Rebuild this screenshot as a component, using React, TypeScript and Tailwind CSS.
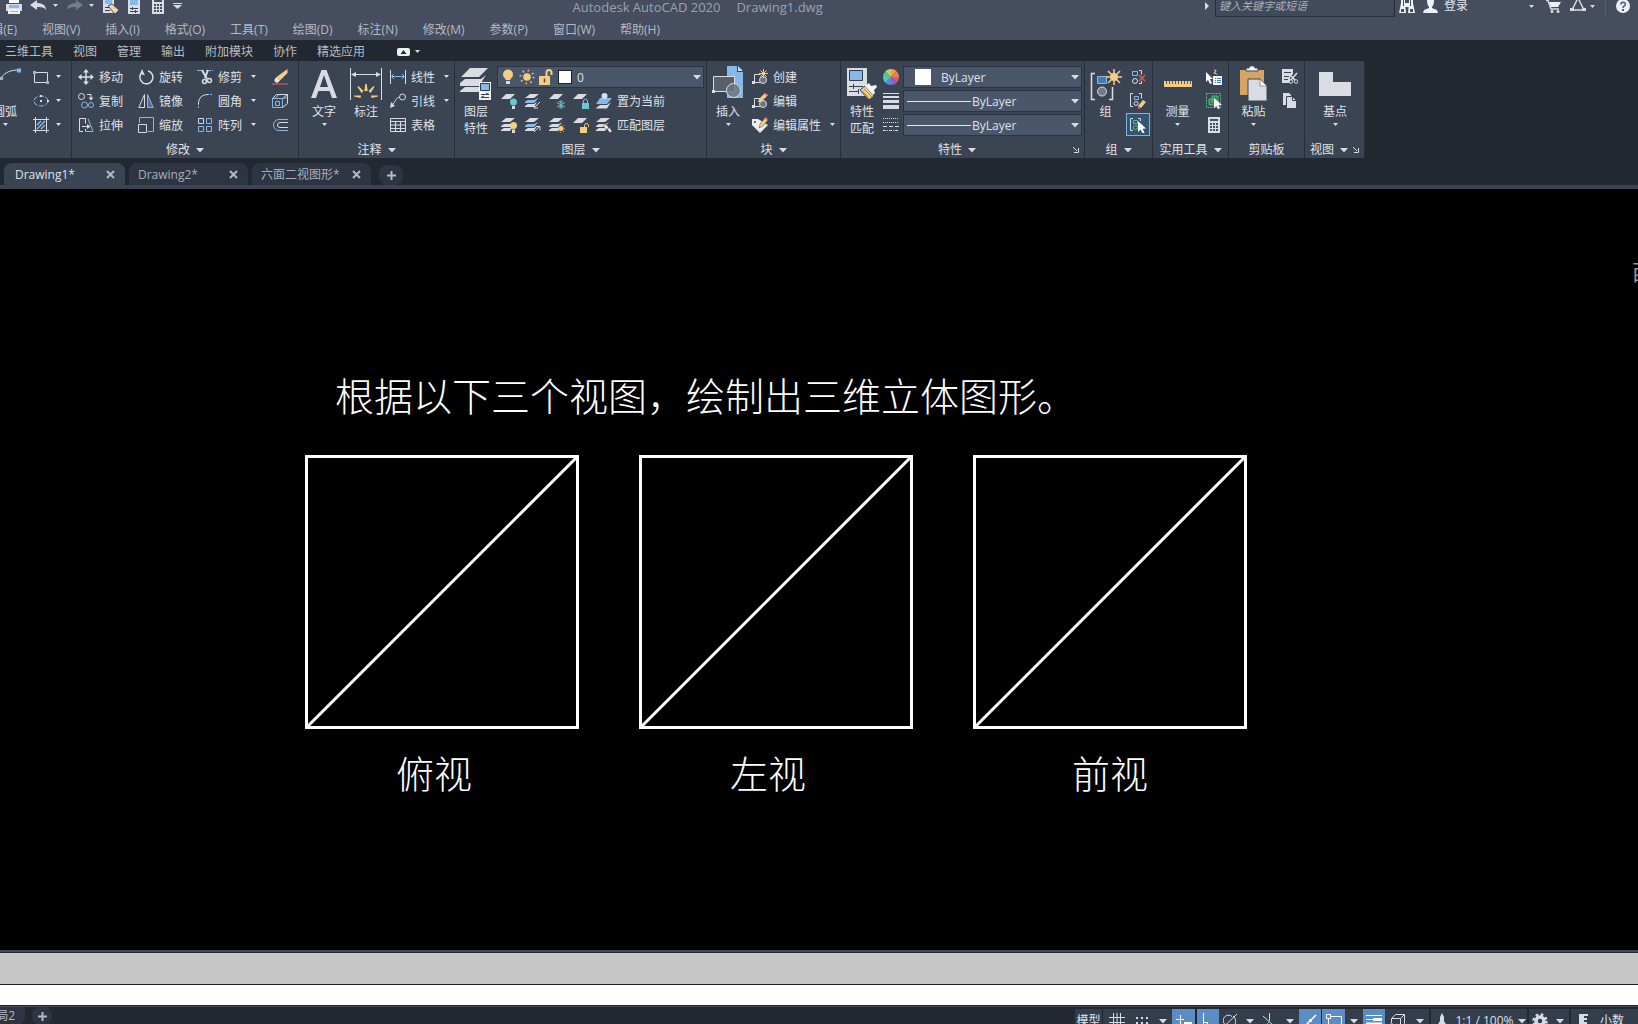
import React from "react";

type IconProps = { w?: number; h?: number; children: React.ReactNode };

const L = "#d9dde3";
const B = "#86b9e8";
const Y = "#f3cd84";
const T = "#6cc7d2";
const G = "#4fc07a";

const Icon = ({ w = 16, h = 16, children }: IconProps) => (
  <svg
    width={w}
    height={h}
    viewBox={`0 0 ${w} ${h}`}
    fill="none"
    stroke={L}
    strokeWidth={1}
    className="block shrink-0"
    aria-hidden="true"
  >
    {children}
  </svg>
);

const Caret = ({ big = false }: { big?: boolean }) =>
  big ? (
    <Icon w={8} h={5}>
      <path d="M0 0h8L4 4.5z" fill={L} stroke="none" />
    </Icon>
  ) : (
    <Icon w={5} h={4}>
      <path d="M0 0h5L2.5 3z" fill={L} stroke="none" />
    </Icon>
  );

/* ---------- draw / modify icons ---------- */

const ArcIcon = () => (
  <Icon w={21} h={40}>
    <path d="M1 13C5 7 11 5 19 5" stroke={L} />
    <path d="M17 3.500h4v4h-4zM0 12h3v3H0z" fill={B} stroke="none" />
  </Icon>
);
const RectIcon = () => (
  <Icon>
    <path d="M1.500 3.500h13v10h-13z" />
    <path d="M0 2h3v3H0zM13 12h3v3h-3z" fill={B} stroke="none" />
  </Icon>
);
const EllipseIcon = () => (
  <Icon>
    <ellipse cx="8" cy="8" rx="7" ry="5" strokeDasharray="5 1.500" stroke={B} />
    <path d="M7 7h2v2H7zM7 2h2v2H7zM14 7h2v2h-2z" fill={L} stroke="none" />
  </Icon>
);
const HatchIcon = () => (
  <Icon>
    <path d="M2.500 0v16M13.500 0v16M0 2.500h16M0 13.500h16" />
    <path d="M4 8l4-4M4 12l8-8M8 12l4-4" stroke={B} strokeWidth="1.500" />
  </Icon>
);
const MoveIcon = () => (
  <Icon>
    <path d="M8 2v12M2 8h12" strokeWidth="1.500" />
    <path d="M8 0l3 3.500H5zM8 16l3-3.500H5zM0 8l3.500-3v6zM16 8l-3.500-3v6z" fill={L} stroke="none" />
  </Icon>
);
const RotateIcon = () => (
  <Icon>
    <path d="M10 2A6.500 6.500 0 1 1 3.500 4" strokeWidth="1.500" />
    <path d="M3 0.500v5h5z" fill={L} stroke="none" transform="rotate(20 5 3)" />
  </Icon>
);
const TrimIcon = () => (
  <Icon>
    <path d="M0 1.500h6" stroke={B} />
    <path d="M9 1.500h7" stroke={B} strokeDasharray="2 1" />
    <path d="M5 1l5 9M11 1L8 9" strokeWidth="2" />
    <circle cx="7.500" cy="12.500" r="2" strokeWidth="1.500" />
    <circle cx="12.500" cy="11.500" r="2" strokeWidth="1.500" />
  </Icon>
);
const CopyIcon = () => (
  <Icon>
    <circle cx="3.500" cy="3.500" r="3" />
    <circle cx="6.500" cy="12" r="3" stroke={B} />
    <circle cx="13" cy="12" r="2.500" stroke={B} />
    <path d="M9 1.500h4V5" />
    <path d="M10.500 4.500h5L13 7.500z" fill={L} stroke="none" />
  </Icon>
);
const MirrorIcon = () => (
  <Icon>
    <path d="M6.500 1.500v13H0.800z" />
    <path d="M9.500 1.500v13h5.700z" stroke={B} fill="#4c7096" />
  </Icon>
);
const FilletIcon = () => (
  <Icon>
    <path d="M1.500 15v-5M10 1.500h6" stroke={B} strokeDasharray="2 1" />
    <path d="M1.500 11C1.500 5 5 1.500 11 1.500" />
  </Icon>
);
const StretchIcon = () => (
  <Icon>
    <path d="M5 14.500H1.500v-13h6v5M7.500 12v2.500" />
    <path d="M4 9.500h6" />
    <path d="M9 7l3.500 2.500L9 12z" fill={L} stroke="none" />
    <path d="M10 1.500l5 13H8" stroke={B} />
  </Icon>
);
const ScaleIcon = () => (
  <Icon>
    <path d="M1.500 6V0.500h14v14H10" stroke={B} />
    <path d="M0.500 7.500h8v8h-8z" />
  </Icon>
);
const ArrayIcon = () => (
  <Icon>
    <path d="M1.500 1.500h5v5h-5z" />
    <path d="M9.500 1.500h5v5h-5zM1.500 9.500h5v5h-5zM9.500 9.500h5v5h-5z" stroke={B} />
  </Icon>
);
const EraseIcon = () => (
  <Icon>
    <path d="M15.500 0v4L8 11.500 4.500 8z" fill={Y} stroke="none" />
    <path d="M4.500 8L8 11.500l-2 2c-2 1-4-1-3.500-3z" fill="#f2e4dc" stroke="none" />
    <path d="M0 15h16" stroke="#e36b5b" />
  </Icon>
);
const ExplodeIcon = () => (
  <Icon>
    <path d="M0.500 5.500h10v9h-10zM3.500 8.500h4v4h-4z" stroke={B} />
    <path d="M0.500 5.500l4-4h11l-5 4M10.500 14.500l5-4v-9" stroke={L} />
    <path d="M7 1.500l-4 4M11 5l4 0" stroke={B} />
  </Icon>
);
const OffsetIcon = () => (
  <Icon>
    <path d="M16 2.500H7a5.500 5.500 0 0 0 0 11h9" stroke={B} />
    <path d="M16 5.500H8a2.500 2.500 0 0 0 0 5h8" />
  </Icon>
);

/* ---------- annotation icons ---------- */

const TextIcon = () => (
  <Icon w={26} h={40}>
    <path
      fillRule="evenodd"
      d="M10.500 5h5L26 33h-5l-2.500-7h-11L5 33H0zM13 10l-4 12h8z"
      fill={L}
      stroke="none"
    />
  </Icon>
);
const DimensionIcon = () => (
  <Icon w={32} h={40}>
    <path d="M0.500 3v32M31.500 3v32M3 9.500h26" />
    <path d="M1 9.500l5-2.500v5zM31 9.500l-5-2.500v5z" fill={L} stroke="none" />
    <path
      d="M15.300 19h1.400l1 7h-3.400zM7.500 22l1-1 5 5-2 2zM24.500 22l-1-1-5 5 2 2zM4 31.500v-1l7 0-0.500 2.500zM28 31.500v-1l-7 0 0.500 2.500z"
      fill={Y}
      stroke="none"
    />
  </Icon>
);
const LinearIcon = () => (
  <Icon>
    <path d="M0.500 1v14M15.500 1v14" />
    <path d="M2 7.500h12M4 5L1.500 7.500 4 10M12 5l2.500 2.500L12 10" stroke={B} />
  </Icon>
);
const LeaderIcon = () => (
  <Icon>
    <circle cx="12.500" cy="4" r="3" />
    <path d="M9.500 4.500C6 4 6 8 3 11" />
    <path d="M0 15l1-6 4 4z" fill={L} stroke="none" />
  </Icon>
);
const TableIcon = () => (
  <Icon>
    <path d="M0.500 1.500h15v13H0.500zM0.500 4.500h15M0.500 8h15M0.500 11.500h15M5.500 4.500v10M10.500 4.500v10" />
  </Icon>
);

/* ---------- layer icons ---------- */

const LayerPropsIcon = () => (
  <Icon w={32} h={40}>
    <path d="M10 3h18l-9 9H1zM0 18l5-4h16l5-4-7 11H0zM0 26l5-4h15l3-4-4 9H0z" fill={L} stroke="none" />
    <path d="M19 17h12v18H19z" fill="#f2f4f6" stroke="none" />
    <path d="M20.500 18.500h9v7h-9z" fill={B} stroke="#2c3a4d" />
    <path d="M21 29.500h8M26 28l3 1.500M29 32.500h-8M24 31l-3 1.500" stroke="#344050" />
  </Icon>
);

const oneSheet = <path d="M5 1h9L9 6H0z" fill={L} stroke="none" />;
const threeSheets = (
  <path d="M5 1h9L9 5H0zM0 9l3-2h7l3-2-4 5H0zM0 13l3-2h6l3-2-3 5H0z" fill={L} stroke="none" />
);

const LayerOffIcon = () => (
  <Icon>
    {oneSheet}
    <circle cx="12.500" cy="9" r="3.500" fill={T} stroke="none" />
    <path d="M11 13h3v3h-3z" fill={L} stroke="none" />
  </Icon>
);
const LayerIsolateIcon = () => (
  <Icon>
    {threeSheets}
    <path d="M0 9l3-2h7l3-2-4 5H0z" fill={B} stroke="none" />
    <path d="M15 9l-5 5M9 11v4h4" />
  </Icon>
);
const LayerFreezeIcon = () => (
  <Icon>
    {oneSheet}
    <path d="M12 7v9M8 9.500l8 4.500M16 9.500L8 14M10 8l2 2 2-2M10 15l2-2 2 2" stroke={T} />
  </Icon>
);
const LayerLockIcon = () => (
  <Icon>
    {oneSheet}
    <path d="M9 10h7v6H9z" fill={T} stroke="none" />
    <path d="M10.500 10V8a2 2 0 0 1 4 0v2" stroke={T} />
  </Icon>
);
const SetCurrentIcon = () => (
  <Icon>
    <path d="M0 15l4-3h7l4-3-4 6.500H0z" fill={L} stroke="none" />
    <path d="M4 5h12l-5 6H0z" fill={B} stroke="none" />
    <circle cx="8.500" cy="3" r="3" fill="#cfe4f7" stroke="none" />
  </Icon>
);
const LayerOnIcon = () => (
  <Icon>
    {threeSheets}
    <circle cx="12.500" cy="8.500" r="3.500" fill={Y} stroke="none" />
    <path d="M11 12.500h3V16h-3z" fill={L} stroke="none" />
  </Icon>
);
const LayerUnisolateIcon = () => (
  <Icon>
    {threeSheets}
    <path d="M0 9l3-2h7l3-2-4 5H0z" fill={B} stroke="none" />
    <path d="M9 15l5-5M11 9.500h4v4" />
  </Icon>
);
const LayerThawIcon = () => (
  <Icon>
    {threeSheets}
    <circle cx="12" cy="11.500" r="2.500" fill={Y} stroke="none" />
    <circle cx="12" cy="11.500" r="4" stroke={Y} strokeDasharray="1 2" />
  </Icon>
);
const LayerUnlockIcon = () => (
  <Icon>
    {oneSheet}
    <path d="M7 10h7v6H7z" fill={Y} stroke="none" />
    <path d="M11.500 10V8.500a2 2 0 0 1 4 0V10" stroke={Y} />
  </Icon>
);
const LayerMatchIcon = () => (
  <Icon>
    {threeSheets}
    <path d="M7 9l3-2 3 4-2 2zM11 12l2-2 3 4-2 2z" fill="#f1e6d0" stroke="#3b4453" strokeWidth="0.500" />
  </Icon>
);
const BulbIcon = () => (
  <Icon w={12}>
    <circle cx="6" cy="5.500" r="5" fill={Y} stroke="none" />
    <path d="M3.500 9h5v2h-5z" fill={Y} stroke="none" />
    <path d="M4 12h4v3H4z" fill={L} stroke="none" />
  </Icon>
);
const SunIcon = () => (
  <Icon>
    <circle cx="8" cy="8" r="3.800" fill={Y} stroke="none" />
    <circle cx="8" cy="8" r="6.500" stroke={Y} strokeWidth="2" strokeDasharray="1.200 3.900" />
  </Icon>
);
const UnlockIcon = () => (
  <Icon>
    <path d="M1 7h11v9H1z" fill={Y} stroke="none" />
    <path d="M8.500 7V3.500a2.500 2.500 0 0 1 5 0V6" stroke={Y} strokeWidth="2" />
    <path d="M6.500 9.500v4" stroke="#5c4a25" strokeWidth="1.500" />
  </Icon>
);

/* ---------- block / property icons ---------- */

const InsertIcon = () => (
  <Icon w={32} h={40}>
    <path d="M15 1h10v6h6v26H15z" fill={B} stroke="none" />
    <path d="M26 1l5 5h-5z" fill="#c3dff7" stroke="none" />
    <path d="M1.500 11.500h21v15h-21z" fill="#5a6069" />
    <path d="M0 25h3v3H0z" fill={L} stroke="none" />
    <circle cx="21.500" cy="25.500" r="7" fill="#6b7480" fillOpacity="0.850" />
  </Icon>
);
const blockBase = (
  <>
    <path d="M2 13.500h7M2.500 13V5.500h6" />
    <circle cx="11" cy="11" r="3.500" fill="#6b7480" />
    <path d="M0 12h3v3H0z" fill={L} stroke="none" />
  </>
);
const CreateBlockIcon = () => (
  <Icon>
    {blockBase}
    <path d="M11.500 0v9M7 4.500h9M8.500 1.500l6 6M14.500 1.500l-6 6" stroke={Y} />
  </Icon>
);
const EditBlockIcon = () => (
  <Icon>
    {blockBase}
    <path d="M6 9l1-3 6-6 3 2-7 7z" fill={Y} stroke="none" />
    <path d="M12 1l1.500-1L16 2l-1 1z" fill="#e36b5b" stroke="none" />
  </Icon>
);
const EditAttrIcon = () => (
  <Icon>
    <path d="M0 2h6l10 6-8 8-8-8z" fill="#eceef1" stroke="none" />
    <circle cx="3" cy="5" r="1" fill="#3b4453" stroke="none" />
    <path d="M7 11l1-4 5-6 3 2-5 6z" fill={Y} stroke="#3b4453" strokeWidth="0.500" />
    <path d="M12 1l1.500-1L16 2l-1 1z" fill="#e36b5b" stroke="none" />
  </Icon>
);
const MatchPropsIcon = () => (
  <Icon w={30} h={40}>
    <path d="M0 3h20v28H0z" fill={L} stroke="none" />
    <path d="M2.500 5.500h13v10h-13z" fill={B} stroke="#344050" />
    <path d="M2 21.500h14M2 26.500h10M6.500 19v5M11.500 24v5" stroke="#344050" />
    <path d="M13 25l5-4 9 10-5 4z" fill={Y} stroke="#3b4453" />
    <path d="M15 26l8 8M17 24l8 8" stroke="#8d7444" strokeWidth="0.700" />
    <path d="M18 21l4-3 2 3 5-1 1 2-3 3 1 3-2 2z" fill="#f2f4f6" stroke="none" />
  </Icon>
);
const wheel = ["#f0a04b", "#ef7d55", "#d9577d", "#8e62c4", "#4f8ee0", "#4fc3d8", "#61c27d", "#c9cf5c"];
const ColorWheelIcon = () => (
  <Icon>
    {wheel.map((c, i) => (
      <path key={c} d="M8 8V0a8 8 0 0 1 5.700 2.300z" fill={c} stroke="none" transform={`rotate(${i * 45} 8 8)`} />
    ))}
  </Icon>
);
const LineweightIcon = () => (
  <Icon>
    <path d="M0 0.500h16" />
    <path d="M0 4h16" strokeWidth="2" />
    <path d="M0 8.500h16" strokeWidth="3" />
    <path d="M0 14h16" strokeWidth="4" />
  </Icon>
);
const LinetypeIcon = () => (
  <Icon>
    <path d="M0 1.500h16M0 5.500h16" strokeDasharray="1 1" />
    <path d="M0 9.500h16" strokeDasharray="4 2" />
    <path d="M0 13.500h16" strokeDasharray="3 1 1 1" />
  </Icon>
);

/* ---------- group / utility / clipboard icons ---------- */

const GroupIcon = () => (
  <Icon w={32} h={40}>
    <path d="M5 8.500H1.500v26H5M19 34.500h3.500V22" strokeWidth="1.500" />
    <path d="M7.500 11.500h9v7h-9z" fill="#3f7fb5" stroke={B} />
    <circle cx="12" cy="26.500" r="4.500" fill="#737b87" />
    <path d="M24 4v16M16 12h16M18 6l12 12M30 6L18 18" stroke={Y} strokeWidth="1.500" />
    <circle cx="24" cy="12" r="4" fill={Y} stroke="none" />
  </Icon>
);
const UngroupIcon = () => (
  <Icon>
    <path d="M2.500 2.500h5v4h-5z" stroke={B} />
    <circle cx="5" cy="12" r="2.500" />
    <path d="M9 1.500h2.500v4M9 14.500h2.500V12" />
    <path d="M9 6l6 6M15 6l-6 6" stroke="#e05a52" strokeWidth="1.500" />
  </Icon>
);
const GroupEditIcon = () => (
  <Icon>
    <path d="M3 0.500H0.500v13H3M9 0.500h2.500v5" />
    <path d="M4.500 3.500h4v3h-4z" stroke={B} />
    <circle cx="6" cy="10.500" r="2" />
    <path d="M8 13l5-6 3 2-5 6z" fill={Y} stroke="none" />
    <path d="M8 13l3 2-3 1z" fill="#e36b5b" stroke="none" />
  </Icon>
);
const GroupSelectIcon = () => (
  <Icon>
    <path d="M3 1.500H0.500v12H3M8 1.500h2.500V4" />
    <path d="M3.500 3.500h4v3h-4z" stroke={G} />
    <circle cx="5.500" cy="10.500" r="2" stroke={G} />
    <path d="M8 4l8 7.500-3.500 0.300 2 3.700-2 1-1.800-4L8 15z" fill="#fff" stroke="none" />
  </Icon>
);
const MeasureIcon = () => (
  <Icon w={28} h={40}>
    <path d="M0 16h28v6H0z" fill={Y} stroke="none" />
    <path
      d="M2.500 16v3M5.500 16v3M8.500 16v3M11.500 16v3M14.500 16v3M17.500 16v3M20.500 16v3M23.500 16v3M26.500 16v3"
      stroke="#6e5a33"
    />
  </Icon>
);
const QuickSelectIcon = () => (
  <Icon>
    <path d="M7 7h9v9H7z" fill="#f2f4f6" stroke="none" />
    <path d="M9 9.500h1M11 9.500h4M9 11.500h1M11 11.500h4M9 13.500h1M11 13.500h4" stroke="#3f7fb5" />
    <path d="M8 0l3 2-2 1 3 3-5-2 2-1z" fill={Y} stroke="none" />
    <path d="M0 3l7 7-3 0 2 4-2 1-2-4-2 2z" fill="#fff" stroke="none" />
  </Icon>
);
const SelectAllIcon = () => (
  <Icon>
    <path d="M0.500 0.500h14v14H0.500z" stroke={G} strokeDasharray="2 1" />
    <path d="M3 6h6v6H3zM6 3h6v6H6z" fill="#2f8a56" stroke={G} />
    <path d="M8 5l8 7-3.500 0.300 1.500 3-2 0.700-1.500-3L8 15z" fill="#fff" stroke="none" />
  </Icon>
);
const CalcIcon = ({ h = 16 }: { h?: number }) => (
  <Icon w={14} h={h}>
    <path d="M1 0h12v16H1z" fill={L} stroke="none" transform={`translate(0 ${h - 16})`} />
    <path
      d="M3 2h8v2H3zM3 6h2v2H3zM6 6h2v2H6zM9 6h2v2H9zM3 9h2v2H3zM6 9h2v2H6zM9 9h2v2H9zM3 12h2v2H3zM6 12h2v2H6zM9 12h2v2H9z"
      fill="#465064"
      stroke="none"
      transform={`translate(0 ${h - 16})`}
    />
  </Icon>
);
const PasteIcon = () => (
  <Icon w={28} h={40}>
    <path d="M0 5h24v25H0z" fill="#d8a463" stroke="none" />
    <path d="M6 6V3h3c0-3 6-3 6 0h3v3z" fill="#f2f4f6" stroke="#3b4453" />
    <path d="M8 14h12l7 7v15H8z" fill={L} stroke="#3b4453" />
    <path d="M20 14l7 7h-7z" fill="#fff" stroke="#3b4453" strokeWidth="0.500" />
  </Icon>
);
const CutIcon = () => (
  <Icon>
    <path d="M0 0h11v5L8 8v6H0z" fill={L} stroke="none" />
    <path d="M2 3.500h7M2 7.500h5M2 10.500h4" stroke="#3b4453" />
    <path d="M15 4l-6 7M8 6l5 5" strokeWidth="1.500" />
    <circle cx="9" cy="12.500" r="1.800" />
    <circle cx="14" cy="12.500" r="1.800" />
  </Icon>
);
const CopyClipIcon = () => (
  <Icon>
    <path d="M1 0h6l2 2v10H1z" fill={L} stroke="none" />
    <path d="M4.500 3.500h6l4 4v8h-10z" fill={L} stroke="#3b4453" />
    <path d="M10.500 3.500v4h4" stroke="#3b4453" />
  </Icon>
);
const BaseIcon = () => (
  <Icon w={32} h={40}>
    <path d="M0 7h14v10h18v14H0z" fill={L} stroke="none" />
  </Icon>
);
const LauncherIcon = () => (
  <Icon w={6} h={6}>
    <path d="M0 0l4 4M5.500 1v4.500H1" />
  </Icon>
);

/* ---------- layout pieces ---------- */

type PanelProps = {
  title: string;
  width: string;
  caret?: boolean;
  launcher?: boolean;
  children: React.ReactNode;
};

const Panel = ({ title, width, caret = true, launcher, children }: PanelProps) => (
  <section className={`flex shrink-0 flex-col border-r border-[#252d38] pt-1 ${width}`}>
    <div className="flex h-[72px]">{children}</div>
    <div className="flex h-[21px] items-end">
      <button className="flex flex-1 items-center justify-center gap-[6px] whitespace-nowrap leading-4">
        {title}
        {caret && <Caret big />}
      </button>
      {launcher && (
        <button className="mr-[5px] mb-[5px]" aria-label={`${title}设置`}>
          <LauncherIcon />
        </button>
      )}
    </div>
  </section>
);

type BigProps = { icon: React.ReactNode; lines: string[]; width: string; caret?: boolean };

const BigButton = ({ icon, lines, width, caret }: BigProps) => (
  <button className={`flex shrink-0 flex-col items-center ${width}`}>
    <span className="h-[38px]">{icon}</span>
    {lines.map((line) => (
      <span key={line} className="leading-[17px] whitespace-nowrap">
        {line}
      </span>
    ))}
    {caret && (
      <span className="pt-[3px]">
        <Caret />
      </span>
    )}
  </button>
);

type ToolProps = { icon: React.ReactNode; text: string; caret?: boolean };

const Tool = ({ icon, text, caret }: ToolProps) => (
  <div className="flex h-6 items-center">
    <button className="flex items-center gap-[5px] whitespace-nowrap">
      {icon}
      <span className="pt-[2px]">{text}</span>
    </button>
    {caret && (
      <button className="ml-2 px-px" aria-label={`${text}选项`}>
        <Caret />
      </button>
    )}
  </div>
);

const IconTool = ({ icon, label }: { icon: React.ReactNode; label: string }) => (
  <button className="flex h-6 w-6 items-center justify-center" aria-label={label}>
    {icon}
  </button>
);

const menus = [
  "视图(V)",
  "插入(I)",
  "格式(O)",
  "工具(T)",
  "绘图(D)",
  "标注(N)",
  "修改(M)",
  "参数(P)",
  "窗口(W)",
  "帮助(H)",
];

const ribbonTabs = ["三维工具", "视图", "管理", "输出", "附加模块", "协作", "精选应用"];

const fileTabs = [
  { name: "Drawing1*", active: true },
  { name: "Drawing2*", active: false },
  { name: "六面二视图形*", active: false },
];

const views = [
  { name: "俯视", indent: "pl-[91px]" },
  { name: "左视", indent: "pl-[91px]" },
  { name: "前视", indent: "pl-[99px]" },
];

const TitleBar = () => (
  <div className="flex h-[18px] items-start whitespace-nowrap">
    <div className="flex flex-[41] items-start pl-[6px]">
      <button aria-label="打印">
        <Icon w={16} h={14}>
          <path d="M3 0h10v3H3z" fill="#fff" stroke="none" />
          <path d="M0 4h16v7H0z" fill={L} stroke="none" />
          <path d="M3 5h10v3H3z" fill={B} stroke="none" />
          <path d="M2 9h12v5H2z" fill="#eef1f4" stroke="none" />
          <path d="M4 11.500h8" stroke={B} />
        </Icon>
      </button>
      <button className="ml-2" aria-label="放弃">
        <Icon w={17} h={14}>
          <path d="M0 5l7-5v3c5 0 9 2 9 7-2-3-5-3-9-3v3z" fill={L} stroke="none" />
        </Icon>
      </button>
      <button className="ml-[6px] pt-1" aria-label="放弃列表">
        <Caret />
      </button>
      <button className="ml-2" aria-label="重做">
        <Icon w={17} h={14}>
          <path d="M17 5l-7-5v3C5 3 1 5 1 10c2-3 5-3 9-3v3z" fill="#747d8c" stroke="none" />
        </Icon>
      </button>
      <button className="ml-[6px] pt-1" aria-label="重做列表">
        <Caret />
      </button>
      <button className="ml-[9px]" aria-label="特性匹配">
        <Icon w={16} h={14}>
          <path d="M0 0h11v13H0z" fill={L} stroke="none" />
          <path d="M2 0h7v4H2z" fill={B} stroke="none" />
          <path d="M2 7.500h7M2 10.500h5" stroke="#344050" />
          <path d="M5 6l4-2 7 6-4 4z" fill="#f1d9a6" stroke="#465064" />
        </Icon>
      </button>
      <button className="ml-2" aria-label="特性">
        <Icon w={14} h={14}>
          <path d="M1 0h12v14H1z" fill={L} stroke="none" />
          <path d="M3 0h8v5H3z" fill={B} stroke="none" />
          <path d="M3 8.500h8M3 11.500h8M5.500 7v3M8.500 10v3" stroke="#344050" />
        </Icon>
      </button>
      <button className="ml-[10px]" aria-label="计算器">
        <CalcIcon h={14} />
      </button>
      <button className="ml-2 pt-[3px]" aria-label="自定义快速访问工具栏">
        <Icon w={10} h={6}>
          <path d="M0 0.500h9" />
          <path d="M0 2h9L4.500 6z" fill={L} stroke="none" />
        </Icon>
      </button>
    </div>
    <h1 className="flex gap-4 text-[13px] leading-[14px] font-normal text-[#9ba2af]">
      <span>Autodesk AutoCAD 2020</span>
      <span>Drawing1.dwg</span>
    </h1>
    <div className="flex flex-[59] items-start justify-end">
      <div className="flex items-start">
        <button className="pt-[2px] pr-[6px]" aria-label="展开搜索">
          <Icon w={4} h={8}>
            <path d="M0 0l4 4-4 4z" fill={L} stroke="none" />
          </Icon>
        </button>
        <input
          aria-label="搜索"
          placeholder="键入关键字或短语"
          className="h-[17px] w-[180px] border border-t-0 border-[#262e3b] bg-[#414a5b] px-[3px] pb-[6px] font-['Noto_Sans_CJK_SC',sans-serif] text-[11px] leading-3 italic outline-none placeholder:text-[#aab0ba] placeholder:italic"
        />
      </div>
      <button className="ml-1" aria-label="查找">
        <Icon w={16} h={14}>
          <path d="M2 0h4v3l1 10H0L2 3zM10 0h4v3l2 10H9l1-10zM6 3h4v4H6z" fill="#eef1f4" stroke="none" />
          <path d="M2 9h3v3H2zM11 9h3v3h-3zM4 0h1v6H4zM11 0h1v6h-1z" fill="#465064" stroke="none" />
        </Icon>
      </button>
      <button className="ml-2 flex items-start gap-[6px] leading-3 text-[#e3e6ea]">
        <Icon w={15} h={14}>
          <path d="M4 0h7c0 4-1 6-2 7v1l5 2 1 3H0l1-3 5-2V7C5 6 4 4 4 0z" fill="#eef1f4" stroke="none" />
        </Icon>
        登录
      </button>
      <button className="ml-[61px] pt-[5px]" aria-label="登录选项">
        <Caret />
      </button>
      <button className="ml-3" aria-label="商店">
        <Icon w={16} h={14}>
          <path d="M0 0.500h2l3 8.500h8" strokeWidth="1.500" />
          <path d="M3 2h12l-3 5H5z" fill="#eef1f4" stroke="none" />
          <circle cx="6" cy="11.500" r="1.500" fill={L} stroke="none" />
          <circle cx="12" cy="11.500" r="1.500" fill={L} stroke="none" />
        </Icon>
      </button>
      <button className="ml-2" aria-label="应用">
        <Icon w={16} h={14}>
          <path d="M7 0L2 10h12L9 0" strokeWidth="1.500" />
          <path d="M0 8h4v3H0zM12 8h4v3h-4z" fill={L} stroke="none" />
        </Icon>
      </button>
      <button className="ml-1 pt-[5px]" aria-label="应用选项">
        <Caret />
      </button>
      <span className="mx-[10px] h-4 w-px bg-[#565f70]" />
      <button className="mr-2" aria-label="帮助">
        <Icon w={14} h={14}>
          <circle cx="7" cy="6" r="7" fill="#eef1f4" stroke="none" />
          <path d="M4.800 4.500c0-3 4.500-3 4.500-0.300C9.300 6 7 5.800 7 8" stroke="#3c5c9c" strokeWidth="1.500" />
          <path d="M6 9h2v2H6z" fill="#3c5c9c" stroke="none" />
        </Icon>
      </button>
    </div>
  </div>
);

const MenuBar = () => (
  <nav className="flex h-[22px] items-center gap-[25px] pt-[2px] leading-4 whitespace-nowrap text-[#b4bac4]">
    <button className="flex w-[17px] justify-end overflow-hidden">编辑(E)</button>
    {menus.map((m) => (
      <button key={m}>{m}</button>
    ))}
  </nav>
);

const RibbonTabs = () => (
  <nav className="flex h-[21px] items-center gap-5 bg-[#212830] pt-[2px] pl-[5px] whitespace-nowrap text-[#b7bcc4]">
    {ribbonTabs.map((t) => (
      <button key={t}>{t}</button>
    ))}
    <button className="ml-3 flex items-center gap-[5px]" aria-label="最小化功能区">
      <Icon w={13} h={8}>
        <rect width="13" height="8" rx="2" fill="#eef1f4" stroke="none" />
        <path d="M3.500 6l3-4 3 4z" fill="#212830" stroke="none" />
      </Icon>
      <Caret />
    </button>
  </nav>
);

const PropertySelect = ({ label }: { label: string }) => (
  <div className="flex h-[22px] items-center border border-[#2b3442] bg-[#4a566a] pr-[2px] pl-[3px]">
    <span className="h-px w-16 bg-[#e3e6ea]" />
    <select aria-label={label} className="ml-px flex-1 appearance-none pt-[2px] outline-none">
      <option>ByLayer</option>
    </select>
    <Caret big />
  </div>
);

const Ribbon = () => (
  <div className="flex bg-[#212830] text-[#dfe2e7]">
    <div className="flex h-[97px] bg-[#3b4453]">
      <section className="flex w-[72px] shrink-0 border-r border-[#252d38] pt-1">
        <button className="flex h-[72px] w-[21px] flex-col">
          <span className="h-[38px]">
            <ArcIcon />
          </span>
          <span className="flex w-[17px] justify-end overflow-hidden leading-[17px] whitespace-nowrap">圆弧</span>
          <span className="pt-[3px] pl-[3px]">
            <Caret />
          </span>
        </button>
        <div className="ml-2 flex flex-col">
          {[
            { name: "矩形", icon: <RectIcon /> },
            { name: "椭圆", icon: <EllipseIcon /> },
            { name: "图案填充", icon: <HatchIcon /> },
          ].map((t) => (
            <button key={t.name} className="flex h-6 w-9 items-center gap-[7px] pl-1" aria-label={t.name}>
              {t.icon}
              <Caret />
            </button>
          ))}
        </div>
      </section>

      <Panel title="修改" width="w-[227px]">
        <div className="w-[60px] shrink-0 pl-[6px]">
          <Tool icon={<MoveIcon />} text="移动" />
          <Tool icon={<CopyIcon />} text="复制" />
          <Tool icon={<StretchIcon />} text="拉伸" />
        </div>
        <div className="w-[59px] shrink-0 pl-[6px]">
          <Tool icon={<RotateIcon />} text="旋转" />
          <Tool icon={<MirrorIcon />} text="镜像" />
          <Tool icon={<ScaleIcon />} text="缩放" />
        </div>
        <div className="w-[77px] shrink-0 pl-[6px]">
          <Tool icon={<TrimIcon />} text="修剪" caret />
          <Tool icon={<FilletIcon />} text="圆角" caret />
          <Tool icon={<ArrayIcon />} text="阵列" caret />
        </div>
        <div>
          <IconTool icon={<EraseIcon />} label="删除" />
          <IconTool icon={<ExplodeIcon />} label="分解" />
          <IconTool icon={<OffsetIcon />} label="偏移" />
        </div>
      </Panel>

      <Panel title="注释" width="w-[156px]">
        <div className="flex pl-1">
          <BigButton icon={<TextIcon />} lines={["文字"]} width="w-[42px]" caret />
          <BigButton icon={<DimensionIcon />} lines={["标注"]} width="w-[42px]" />
        </div>
        <div className="pl-[3px]">
          <Tool icon={<LinearIcon />} text="线性" caret />
          <Tool icon={<LeaderIcon />} text="引线" caret />
          <Tool icon={<TableIcon />} text="表格" />
        </div>
      </Panel>

      <Panel title="图层" width="w-[252px]">
        <BigButton icon={<LayerPropsIcon />} lines={["图层", "特性"]} width="w-[42px]" />
        <div className="flex-1 pr-[2px]">
          <div className="flex h-6 items-center">
            <div className="flex h-[22px] flex-1 items-center border border-[#2b3442] bg-[#4a566a] pr-[2px] pl-1">
              <BulbIcon />
              <span className="ml-[5px]">
                <SunIcon />
              </span>
              <span className="ml-[3px]">
                <UnlockIcon />
              </span>
              <span className="ml-1 h-[14px] w-[14px] border border-[#1d232c] bg-white" />
              <select aria-label="图层" className="ml-[5px] flex-1 appearance-none pt-[2px] outline-none">
                <option>0</option>
              </select>
              <Caret big />
            </div>
          </div>
          <div className="flex">
            <IconTool icon={<LayerOffIcon />} label="关闭图层" />
            <IconTool icon={<LayerIsolateIcon />} label="隔离" />
            <IconTool icon={<LayerFreezeIcon />} label="冻结" />
            <IconTool icon={<LayerLockIcon />} label="锁定" />
            <div className="pl-[3px]">
              <Tool icon={<SetCurrentIcon />} text="置为当前" />
            </div>
          </div>
          <div className="flex">
            <IconTool icon={<LayerOnIcon />} label="打开所有图层" />
            <IconTool icon={<LayerUnisolateIcon />} label="取消隔离" />
            <IconTool icon={<LayerThawIcon />} label="解冻" />
            <IconTool icon={<LayerUnlockIcon />} label="解锁" />
            <div className="pl-[3px]">
              <Tool icon={<LayerMatchIcon />} text="匹配图层" />
            </div>
          </div>
        </div>
      </Panel>

      <Panel title="块" width="w-[134px]">
        <BigButton icon={<InsertIcon />} lines={["插入"]} width="w-[42px]" caret />
        <div className="pl-[3px]">
          <Tool icon={<CreateBlockIcon />} text="创建" />
          <Tool icon={<EditBlockIcon />} text="编辑" />
          <Tool icon={<EditAttrIcon />} text="编辑属性" caret />
        </div>
      </Panel>

      <Panel title="特性" width="w-[244px]" launcher>
        <BigButton icon={<MatchPropsIcon />} lines={["特性", "匹配"]} width="w-[42px]" />
        <div className="flex w-5 flex-col">
          {[<ColorWheelIcon key="c" />, <LineweightIcon key="w" />, <LinetypeIcon key="t" />].map((icon, i) => (
            <span key={i} className="flex h-6 items-center">
              {icon}
            </span>
          ))}
        </div>
        <div className="flex flex-1 flex-col justify-around pr-[2px]">
          <div className="flex h-[22px] items-center border border-[#2b3442] bg-[#4a566a] pr-[2px] pl-[11px]">
            <span className="h-4 w-4 bg-white" />
            <select aria-label="颜色" className="ml-[10px] flex-1 appearance-none pt-[2px] outline-none">
              <option>ByLayer</option>
            </select>
            <Caret big />
          </div>
          <PropertySelect label="线宽" />
          <PropertySelect label="线型" />
        </div>
      </Panel>

      <Panel title="组" width="w-[68px]">
        <BigButton icon={<GroupIcon />} lines={["组"]} width="w-[41px]" />
        <div>
          <IconTool icon={<UngroupIcon />} label="解除编组" />
          <IconTool icon={<GroupEditIcon />} label="组编辑" />
          <button
            className="flex h-[23px] w-6 items-center justify-center border border-[#7db4e0] bg-[#2f5673]"
            aria-label="启用/禁用组选择"
          >
            <GroupSelectIcon />
          </button>
        </div>
      </Panel>

      <Panel title="实用工具" width="w-[76px]">
        <BigButton icon={<MeasureIcon />} lines={["测量"]} width="w-[49px]" caret />
        <div>
          <IconTool icon={<QuickSelectIcon />} label="快速选择" />
          <IconTool icon={<SelectAllIcon />} label="全部选择" />
          <IconTool icon={<CalcIcon />} label="快速计算器" />
        </div>
      </Panel>

      <Panel title="剪贴板" width="w-[76px]" caret={false}>
        <BigButton icon={<PasteIcon />} lines={["粘贴"]} width="w-[49px]" caret />
        <div>
          <IconTool icon={<CutIcon />} label="剪切" />
          <IconTool icon={<CopyClipIcon />} label="复制" />
        </div>
      </Panel>

      <Panel title="视图" width="w-[60px]" launcher>
        <BigButton icon={<BaseIcon />} lines={["基点"]} width="w-[60px]" caret />
      </Panel>
    </div>
  </div>
);

const FileTabs = () => (
  <div className="flex h-[31px] items-end border-b-4 border-[#3b4453] bg-[#212830] pl-1 text-[#a9afb9]">
    {fileTabs.map((t) => (
      <div
        key={t.name}
        className={
          t.active
            ? "mr-1 flex h-[22px] w-[121px] items-center justify-between rounded-t-lg bg-[#3b4453] pr-[10px] pl-[11px] text-[#dfe2e7]"
            : "mr-1 flex h-[22px] w-[119px] items-center justify-between rounded-t-lg bg-[#2d3542] pr-[10px] pl-[9px]"
        }
      >
        <button className="pt-[2px] whitespace-nowrap">{t.name}</button>
        <button aria-label={`关闭 ${t.name}`}>
          <Icon w={9} h={9}>
            <path d="M1 1l7 7M8 1L1 8" stroke="#b4bac4" strokeWidth="2" />
          </Icon>
        </button>
      </div>
    ))}
    <button
      className="ml-1 flex h-5 w-6 items-center justify-center rounded-lg bg-[#2d3542]"
      aria-label="新图形"
    >
      <Icon w={9} h={9}>
        <path d="M4.500 0v9M0 4.500h9" stroke="#b4bac4" strokeWidth="2" />
      </Icon>
    </button>
  </div>
);

const Canvas = () => (
  <main className="relative flex-1 overflow-hidden bg-black pt-[181px] pl-[305px] text-white">
    <p className="pl-[30px] text-[39px] leading-[52px] font-light whitespace-nowrap">
      根据以下三个视图，绘制出三维立体图形。
    </p>
    <div className="mt-[33px] flex gap-[60px]">
      {views.map((v) => (
        <figure key={v.name} className="w-[274px] shrink-0">
          <svg viewBox="0 0 274 274" className="block w-full" fill="none" stroke="#fff" strokeWidth={3}>
            <path d="M1.500 1.500h271v271h-271zM1.500 272.500l271-271" />
          </svg>
          <figcaption className={`pt-[18px] text-[38px] leading-[52px] font-light ${v.indent}`}>{v.name}</figcaption>
        </figure>
      ))}
    </div>
    {/* west letter of the view cube, mostly past the window's edge */}
    <span className="absolute top-[68px] -right-4 text-[22px] leading-7 text-[#9a9a9a]">西</span>
  </main>
);

type CellProps = { label: string; width: string; on?: boolean; children: React.ReactNode };

const Cell = ({ label, width, on, children }: CellProps) => (
  <button
    aria-label={label}
    className={`flex h-6 shrink-0 items-center justify-center ${on ? "bg-[#5b8cc4]" : "bg-[#343d4b]"} ${width}`}
  >
    {children}
  </button>
);

const StatusBar = () => (
  <footer className="flex h-[18px] items-start overflow-hidden border-t border-[#454e58] bg-[#212830] whitespace-nowrap text-[#dfe2e7]">
    <div className="flex items-center">
      <button className="flex h-[18px] w-[25px] items-center overflow-hidden rounded-br-lg bg-[#2d3542] text-[#b4bac4]">
        <span className="flex w-[15px] justify-end">布局2</span>
      </button>
      <button
        className="ml-[7px] flex h-[18px] w-5 items-center justify-center rounded-lg bg-[#2d3542]"
        aria-label="新建布局"
      >
        <Icon w={9} h={9}>
          <path d="M4.500 0v9M0 4.500h9" stroke="#b4bac4" strokeWidth="2" />
        </Icon>
      </button>
    </div>
    <div className="ml-auto flex pt-[2px]">
      <button className="mr-px flex h-6 w-[27px] items-center justify-center bg-[#343d4b]">模型</button>
      <Cell label="栅格" width="w-7">
        <Icon>
          <path d="M4.500 0v16M11.500 0v16M0 4.500h16M0 9.500h16" />
          <path d="M8 0v16" />
        </Icon>
      </Cell>
      <Cell label="捕捉" width="w-[22px]">
        <Icon w={14}>
          <path d="M1 4h2v2H1zM6 4h2v2H6zM11 4h2v2h-2zM1 9h2v2H1zM6 9h2v2H6zM11 9h2v2h-2z" fill={L} stroke="none" />
        </Icon>
      </Cell>
      <Cell label="捕捉选项" width="w-[19px]">
        <Caret big />
      </Cell>
      <Cell label="动态输入" width="w-[23px]" on>
        <Icon>
          <path d="M0 6.500h8M4.500 2v9" stroke="#fff" />
          <path d="M8 9h8v4H8z" fill="#fff" stroke="none" />
        </Icon>
      </Cell>
      <span className="w-[2px]" />
      <Cell label="正交" width="w-[22px]" on>
        <Icon>
          <path d="M3.500 0v13.500H16M3.500 9.500h4v4" stroke="#fff" />
        </Icon>
      </Cell>
      <Cell label="极轴" width="w-6">
        <Icon>
          <path d="M16 11.500H2A5 5 0 0 1 9 3.500M3 11.500L14 1M10 3c3 2 3 6 2 9" />
        </Icon>
      </Cell>
      <Cell label="极轴选项" width="w-[14px]">
        <Caret big />
      </Cell>
      <Cell label="等轴测" width="w-6">
        <Icon>
          <path d="M2 3l12 11" />
          <path d="M8.500 0v8" stroke="#d8dfa0" />
          <path d="M9 8l-6 6" stroke={G} />
        </Icon>
      </Cell>
      <Cell label="等轴测选项" width="w-[18px]">
        <Caret big />
      </Cell>
      <Cell label="对象捕捉追踪" width="w-[22px]" on>
        <Icon>
          <path d="M2 14L14 2" stroke="#fff" strokeWidth="1.500" />
          <path d="M7 6h3v3H7z" fill="#fff" stroke="none" />
        </Icon>
      </Cell>
      <span className="w-px" />
      <Cell label="对象捕捉" width="w-[23px]" on>
        <Icon>
          <path d="M0.500 1.500h4v4h-4zM5 3.500h10.500V14M2.500 6v8" stroke="#fff" />
        </Icon>
      </Cell>
      <Cell label="对象捕捉选项" width="w-[18px]">
        <Caret big />
      </Cell>
      <Cell label="线宽" width="w-[22px]" on>
        <Icon>
          <path d="M0 2.500h16M0 6.500h7" stroke="#fff" />
          <path d="M7 6.500h9" stroke="#fff" strokeWidth="3" />
          <path d="M0 11h16" stroke="#fff" strokeWidth="3" />
        </Icon>
      </Cell>
      <Cell label="三维对象捕捉" width="w-[26px]">
        <Icon>
          <path d="M1.500 5.500h9v9h-9zM1.500 5.500l4-4h9l-4 4M14.500 1.500v9l-4 4" />
          <path d="M0 10h3v3H0z" fill="#c9605c" stroke="none" />
        </Icon>
      </Cell>
      <Cell label="三维对象捕捉选项" width="w-[18px]">
        <Caret big />
      </Cell>
      <span className="w-[2px]" />
      <Cell label="注释可见性" width="w-[22px]">
        <Icon w={10}>
          <path d="M5 0l2 4v4l3 5H0l3-5V4z" fill={L} stroke="none" />
        </Icon>
      </Cell>
      <button className="flex h-6 w-[74px] items-center justify-center gap-1 bg-[#343d4b] pl-px">
        1:1 / 100%
        <Caret big />
      </button>
      <span className="w-[2px]" />
      <Cell label="切换工作空间" width="w-[22px]">
        <Icon>
          <circle cx="8" cy="8" r="4" strokeWidth="3.500" />
          <circle cx="8" cy="8" r="6.500" strokeWidth="2.400" strokeDasharray="2.600 2.500" />
        </Icon>
      </Cell>
      <Cell label="工作空间选项" width="w-[18px]">
        <Caret big />
      </Cell>
      <span className="w-[2px]" />
      <button className="flex h-6 w-[67px] items-center gap-3 bg-[#343d4b] pl-2">
        <Icon w={9}>
          <path d="M0 1h9v2H5v2h3v2H5v2h3v2H5v2h4v2H0z" fill={L} stroke="none" />
        </Icon>
        小数
      </button>
    </div>
  </footer>
);

const App = () => {
  return (
    <div className="flex h-screen flex-col overflow-hidden bg-[#454d5f] font-['Open_Sans','Noto_Sans_CJK_SC',sans-serif] text-xs">
      <header className="shrink-0">
        <TitleBar />
        <MenuBar />
        <RibbonTabs />
        <Ribbon />
        <FileTabs />
      </header>
      <Canvas />
      <div className="shrink-0">
        <div className="h-[3px] border-b border-[#1f2530] bg-[#434a58]" />
        <div className="h-[31px] bg-[#c6c6c6]" />
        <input
          aria-label="命令行"
          className="block h-[22px] w-full border-y border-[#1f2530] bg-white px-2 text-black outline-none"
        />
        <StatusBar />
      </div>
    </div>
  );
};

export default App;
